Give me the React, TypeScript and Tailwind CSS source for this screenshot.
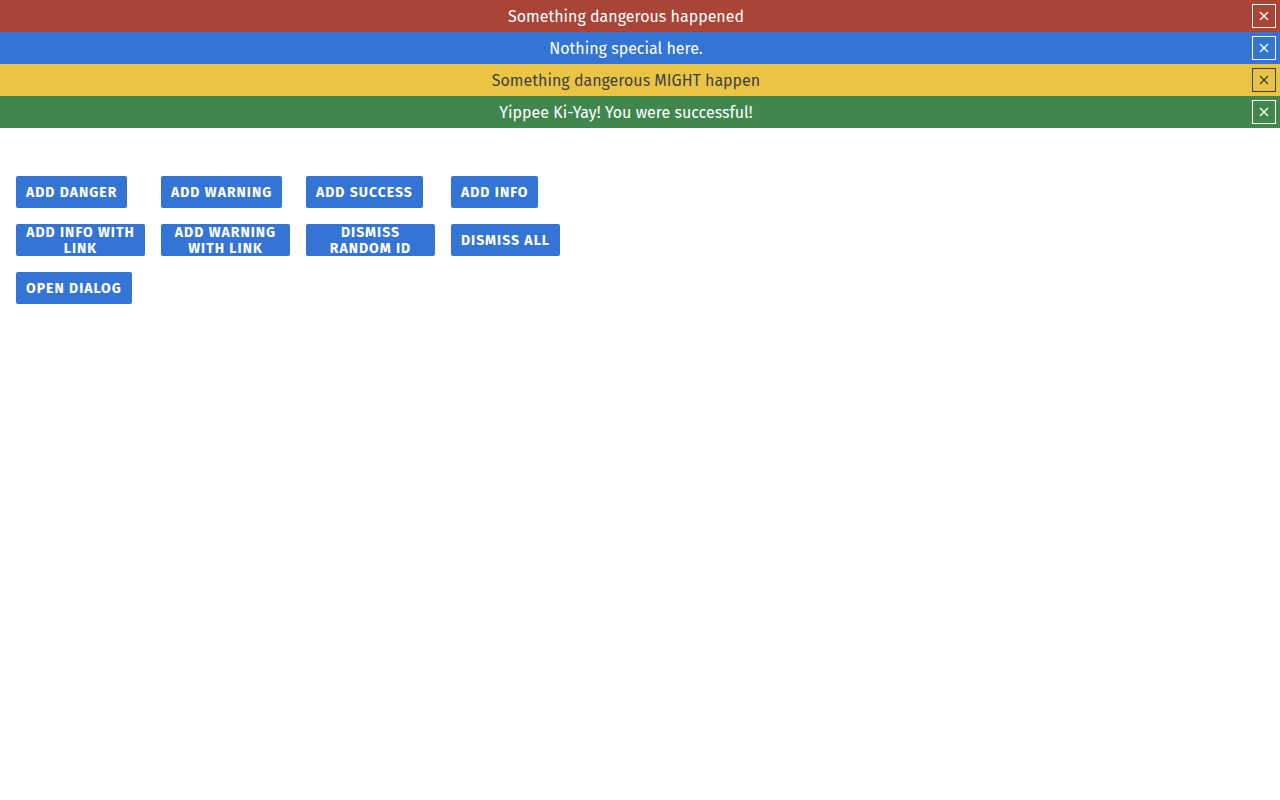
import React from "react";

type Alert = { id: number; text: string; bg: string; fg: string; border: string };

const alerts: Alert[] = [
  { id: 1, text: "Something dangerous happened", bg: "bg-[#a94436]", fg: "text-white", border: "border-white" },
  { id: 2, text: "Nothing special here.", bg: "bg-[#3474d4]", fg: "text-white", border: "border-white" },
  { id: 3, text: "Something dangerous MIGHT happen", bg: "bg-[#eac543]", fg: "text-[#3f3f46]", border: "border-[#3f3f46]" },
  { id: 4, text: "Yippee Ki-Yay! You were successful!", bg: "bg-[#41864f]", fg: "text-white", border: "border-white" },
];

const buttons = [
  "Add danger",
  "Add warning",
  "Add success",
  "Add info",
  "Add info with link",
  "Add warning with link",
  "Dismiss random id",
  "Dismiss all",
  "Open dialog",
];

const CloseIcon = () => (
  <svg viewBox="0 0 12 12" className="h-3 w-3" fill="none" stroke="currentColor" strokeWidth="1.4">
    <path d="M2 2l8 8M10 2l-8 8" />
  </svg>
);

export default function App() {
  return (
    <div className="min-h-screen bg-white" style={{ fontFamily: '"Fira Sans", "Open Sans", "Noto Sans", sans-serif' }}>
      <div>
        {alerts.map((a) => (
          <div key={a.id} className={`flex h-8 items-center ${a.bg} ${a.fg}`}>
            <span className="flex-1 pt-0.5 text-center text-base">{a.text}</span>
            <button className={`mr-1 flex h-6 w-6 shrink-0 items-center justify-center border ${a.border}`}>
              <CloseIcon />
            </button>
          </div>
        ))}
      </div>

      {/* toolbar */}
      <div className="grid grid-cols-[repeat(4,129px)] gap-4 px-4 pt-12">
        {buttons.map((b) => (
          <button
            key={b}
            className="flex h-8 max-w-[129px] items-center justify-center justify-self-start rounded-[2px] bg-[#3474d4] px-2.5 pt-0.5 text-center text-sm font-bold uppercase leading-4 tracking-[1px] text-white"
          >
            {b}
          </button>
        ))}
      </div>
    </div>
  );
}
